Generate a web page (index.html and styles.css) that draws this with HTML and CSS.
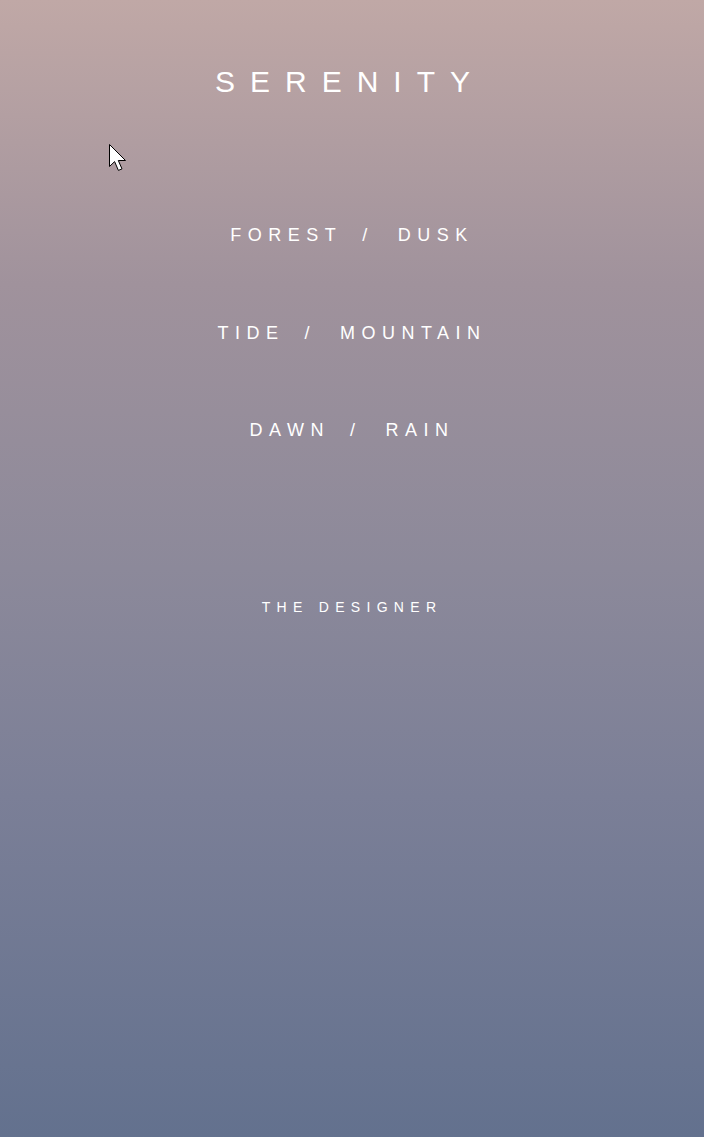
FILE: index.html
```html
<!DOCTYPE html>
<html lang="en">
<head>
<meta charset="utf-8">
<title>Serenity</title>
<link rel="stylesheet" href="styles.css">
</head>
<body>
<div class="page">
  <h1 class="title">SERENITY</h1>
  <nav class="menu">
    <a class="item" href="#">FOREST<span class="sep">/</span>DUSK</a>
    <a class="item" href="#">TIDE<span class="sep">/</span>MOUNTAIN</a>
    <a class="item" href="#">DAWN<span class="sep">/</span>RAIN</a>
  </nav>
  <p class="credit">THE DESIGNER</p>
  <svg class="cursor" width="20" height="28" viewBox="0 0 20 28" aria-hidden="true">
    <path d="M0.5 0.5 L0.5 22.5 L5.6 17.6 L9.4 26.4 L13 24.9 L9.3 16.5 L16.5 16.5 Z" fill="#fff" stroke="#000" stroke-width="1" stroke-linejoin="miter"/>
  </svg>
</div>
</body>
</html>
```
FILE: styles.css
```css
html, body {
  margin: 0;
  padding: 0;
}
body {
  font-family: "Liberation Sans", Arial, sans-serif;
  color: #fff;
  background: linear-gradient(180deg, #c0a8a6 0%, #a0929c 25%, #8c899a 50%, #7b7f97 70%, #63718e 100%);
  min-height: 100vh;
}
.page {
  position: relative;
  min-height: 100vh;
  display: flex;
  flex-direction: column;
  align-items: center;
}
.title {
  margin: 67px 0 0 -4px;
  font-size: 30px;
  line-height: 30px;
  font-weight: 400;
  letter-spacing: 15px;
}
.menu {
  margin-top: 129px;
  display: flex;
  flex-direction: column;
  align-items: center;
  gap: 79.5px;
}
.item {
  color: #fff;
  text-decoration: none;
  font-size: 18px;
  line-height: 18px;
  letter-spacing: 6.5px;
  white-space: nowrap;
}
.sep {
  margin: 0 24px 0 20px;
}
.credit {
  margin: 161px 0 0;
  font-size: 14px;
  line-height: 14px;
  letter-spacing: 6.3px;
}
.cursor {
  position: absolute;
  left: 109px;
  top: 144px;
}
```
